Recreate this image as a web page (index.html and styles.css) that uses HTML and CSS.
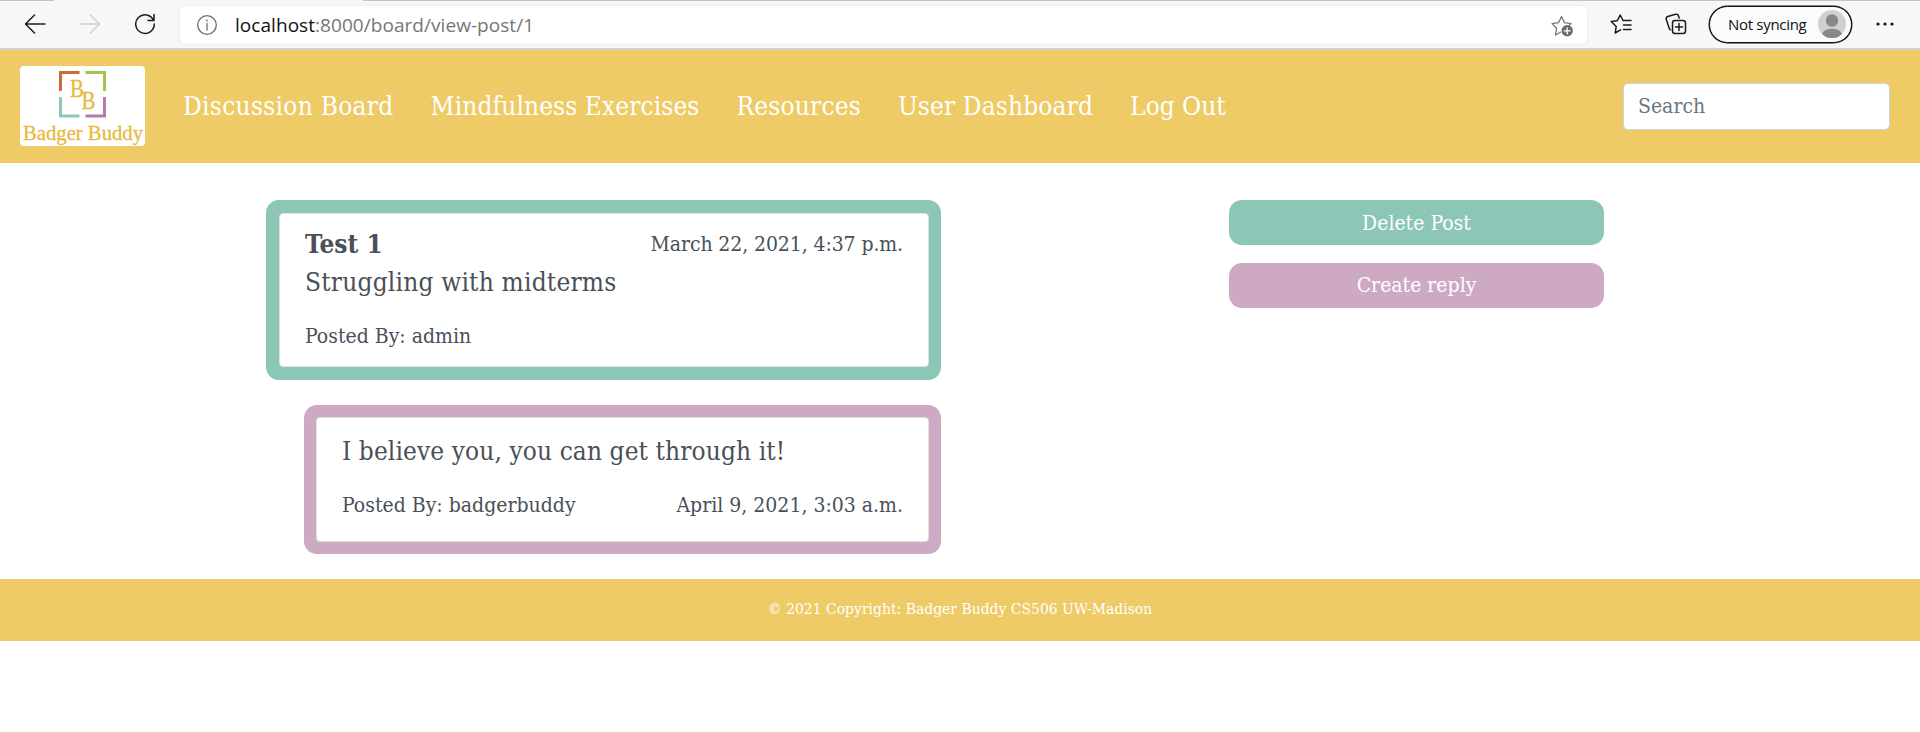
FILE: index.html
```html
<!DOCTYPE html>
<html lang="en">
<head>
<meta charset="utf-8">
<title>Badger Buddy</title>
<link rel="stylesheet" href="styles.css">
</head>
<body>
<div class="toolbar">
  <svg class="ico back" width="22" height="22" viewBox="0 0 22 22"><path d="M21 11H2M10.500 2L1.500 11l9 9"/></svg>
  <svg class="ico forward" width="22" height="22" viewBox="0 0 22 22"><path d="M1 11h19M11.500 2l9 9-9 9"/></svg>
  <svg class="ico reload" width="22" height="22" viewBox="0 0 22 22"><path d="M19.600 7.500A9.300 9.300 0 1 0 20.300 11M20 1.500v6h-6"/></svg>
  <div class="address">
    <svg class="ico info" width="22" height="22" viewBox="0 0 22 22"><circle cx="11" cy="11" r="9.300"/><path d="M11 9.500v6.500M11 6v1"/></svg>
    <span class="url"><span class="host">localhost</span>:8000/board/view-post/1</span>
    <svg class="ico addstar" width="24" height="24" viewBox="0 0 24 24"><path d="M10.500 19.200L5.500 22l1-6.700L2 10.600l6.500-1L11.500 3.500l3 6.100 6.500 1-2 2"/><circle class="plusdot" cx="17.200" cy="17.800" r="5.700"/><path class="plus" d="M17.200 14.800v6M14.200 17.800h6"/></svg>
  </div>
  <svg class="ico favs" width="24" height="24" viewBox="0 0 24 24"><path d="M14 8.500h8M14.500 13H22M14.500 17.500H22M11.500 17.800L6.200 21 7.200 14.500 2.200 9.500l6.100-.8L11.200 3l2.800 5.500"/></svg>
  <svg class="ico collections" width="24" height="24" viewBox="0 0 24 24"><rect x="8.500" y="8.500" width="13" height="13" rx="2.500"/><path d="M15 11.500v7M11.500 15h7M5.500 17L2.300 7.500a2.300 2.300 0 0 1 1.500-3L11.500 2.300a2.300 2.300 0 0 1 2.900 1.500L15.200 6M5.500 17l1 .8"/></svg>
  <div class="profile">
    <span>Not syncing</span>
    <svg width="28" height="28" viewBox="0 0 28 28"><circle cx="14" cy="14" r="14" fill="#d2d0ce"/><circle cx="14" cy="10.500" r="6.200" fill="#8a8886"/><path d="M4 24a10.500 7.500 0 0 1 20 0 14 14 0 0 1-20 0" fill="#8a8886"/></svg>
  </div>
  <svg class="dots" width="18" height="6" viewBox="0 0 18 6"><circle cx="2" cy="3" r="1.600"/><circle cx="9" cy="3" r="1.600"/><circle cx="16" cy="3" r="1.600"/></svg>
</div>

<nav class="navbar">
  <svg class="logo" width="125" height="80" viewBox="0 0 125 80">
    <rect width="125" height="80" rx="4" fill="#fff"/>
    <g fill="none" stroke-width="3">
      <path d="M40.500 25V6.500H59.500" stroke="#cf6b35"/>
      <path d="M65.500 6.500H84.500V25" stroke="#9fc651"/>
      <path d="M40.500 31V50H59.500" stroke="#8cc7b8"/>
      <path d="M65.500 50H84.500V31" stroke="#b77bab"/>
    </g>
    <g class="logotext">
      <text x="50" y="30.500" font-size="26" textLength="14" lengthAdjust="spacingAndGlyphs">B</text>
      <text x="61.500" y="42.500" font-size="26" textLength="14" lengthAdjust="spacingAndGlyphs">B</text>
      <text x="3" y="74" font-size="22" textLength="120" lengthAdjust="spacingAndGlyphs">Badger Buddy</text>
    </g>
  </svg>
  <a class="l1">Discussion Board</a>
  <a class="l2">Mindfulness Exercises</a>
  <a class="l3">Resources</a>
  <a class="l4">User Dashboard</a>
  <a class="l5">Log Out</a>
  <input class="search" placeholder="Search">
</nav>

<main class="content">
  <section class="thread">
    <article class="card post">
      <div class="inner">
        <div class="row"><h1>Test 1</h1><span class="date">March 22, 2021, 4:37 p.m.</span></div>
        <p class="body">Struggling with midterms</p>
        <p class="by">Posted By: admin</p>
      </div>
    </article>
    <article class="card reply">
      <div class="inner">
        <p class="body">I believe you, you can get through it!</p>
        <div class="row"><span class="by">Posted By: badgerbuddy</span><span class="date">April 9, 2021, 3:03 a.m.</span></div>
      </div>
    </article>
  </section>
  <aside class="actions">
    <button class="delete">Delete Post</button>
    <button class="create">Create reply</button>
  </aside>
</main>
<footer class="footer">© 2021 Copyright: Badger Buddy CS506 UW-Madison</footer>
</body>
</html>
```
FILE: styles.css
```css
* { box-sizing: border-box; }
body {
  margin: 0;
  background: #fff;
  color: #495057;
  font-family: "DejaVu Serif Condensed", "DejaVu Serif", serif;
  font-stretch: condensed;
}
h1, p { margin: 0; }

.toolbar {
  display: flex;
  align-items: center;
  height: 50px;
  padding-left: 24px;
  background:
    linear-gradient(#c2c2c2, #c2c2c2) 0 0 / 54px 1px no-repeat,
    linear-gradient(#c2c2c2, #c2c2c2) 363px 0 / 1557px 1px no-repeat,
    #f7f7f7;
  border-bottom: 2px solid #d0d0d0;
  font-family: "Open Sans", sans-serif;
  font-stretch: normal;
}
.ico { flex: none; fill: none; stroke: #1b1b1b; stroke-width: 1.5; stroke-linecap: round; stroke-linejoin: round; }
.forward { margin-left: 33px; stroke: #cfcfcf; }
.reload { margin-left: 33px; }
.address {
  display: flex;
  align-items: center;
  width: 1407px;
  height: 38px;
  margin-left: 24px;
  margin-top: 2px;
  padding: 0 13px 0 16px;
  background: #fff;
  border-radius: 5px;
  box-shadow: 0 0 3px #e4e4e4;
}
.info { stroke: #6e6e6e; stroke-width: 1.3; }
.url { margin-left: 17px; font-size: 19px; letter-spacing: 0.05px; line-height: 26px; color: #767676; }
.host { color: #111; }
.addstar { margin-left: auto; stroke: #767676; stroke-width: 1.3; }
.addstar .plusdot { fill: #6b6b6b; stroke: none; }
.addstar .plus { stroke: #fff; }
.favs { margin-left: 22px; }
.collections { margin-left: 31px; }
.profile {
  display: flex;
  align-items: center;
  justify-content: space-between;
  width: 143px;
  height: 37px;
  margin-left: 21px;
  padding: 0 5px 0 18px;
  border: 1px solid #111;
  border-radius: 19px;
  box-shadow: 0 0 0 0.5px #111;
  background: #fbfbfb;
  color: #111;
  font-size: 15px;
  letter-spacing: -0.3px;
  white-space: nowrap;
}
.dots { margin-left: 24px; fill: #111; }

.navbar {
  display: flex;
  align-items: center;
  height: 113px;
  padding: 0 30px 1px 20px;
  background: #eecb66;
  color: #fff;
  font-size: 26px;
  line-height: 42px;
  white-space: nowrap;
}
.logo { margin: 0 38px 1px 0; }
.logotext { fill: #e8b93c; stroke: #e8b93c; stroke-width: 0.3; font-family: "Liberation Serif", serif; }
.navbar a { margin-right: 37px; }
.l1 { letter-spacing: 0.3px; }
.l2 { letter-spacing: 0.1px; }
.l3 { letter-spacing: 0.2px; }
.l4 { letter-spacing: 0.15px; }
.search {
  width: 267px;
  height: 47px;
  margin-left: auto;
  padding: 0 14px;
  border: 1px solid #ced4da;
  border-radius: 5px;
  background: #fff;
  font: inherit;
  font-size: 21px;
}
.search::placeholder { color: #6c757d; opacity: 1; }

.content {
  display: flex;
  justify-content: space-between;
  align-items: flex-start;
  padding: 37px 316px 25px 266px;
}
.thread { display: flex; flex-direction: column; gap: 25px; width: 675px; }
.card { padding: 13px 12px 13px 13px; border-radius: 13px; }
.inner { border: 1px solid #dfdfdf; border-radius: 4px; background: #fff; padding: 11px 25px 0; }
.row { display: flex; justify-content: space-between; align-items: center; }
.post { height: 180px; background: #8cc6b7; }
.post .inner { height: 154px; }
.reply { height: 149px; margin-left: 38px; background: #cea9c4; padding: 12px; }
.reply .inner { height: 125px; padding: 14px 25px 0; }
h1 { font-size: 26px; line-height: 38px; }
.body { font-size: 26px; line-height: 38px; letter-spacing: 0.2px; }
.reply .body { letter-spacing: 0.1px; }
.by, .date { font-size: 21px; line-height: 34px; }
.post .date { letter-spacing: -0.1px; }
.post .by { margin-top: 18px; }
.reply .row { margin-top: 18px; }
.actions { display: flex; flex-direction: column; gap: 18px; width: 375px; }
.actions button {
  height: 45px;
  padding: 0;
  border: 0;
  border-radius: 13px;
  color: #fff;
  font: inherit;
  font-size: 21px;
}
.delete { background: #8cc6b7; }
.actions .create { background: #cea9c4; padding-bottom: 2px; }

.footer {
  height: 62px;
  background: #eecb66;
  color: #fff;
  font-size: 15.5px;
  line-height: 61px;
  text-align: center;
}
```
